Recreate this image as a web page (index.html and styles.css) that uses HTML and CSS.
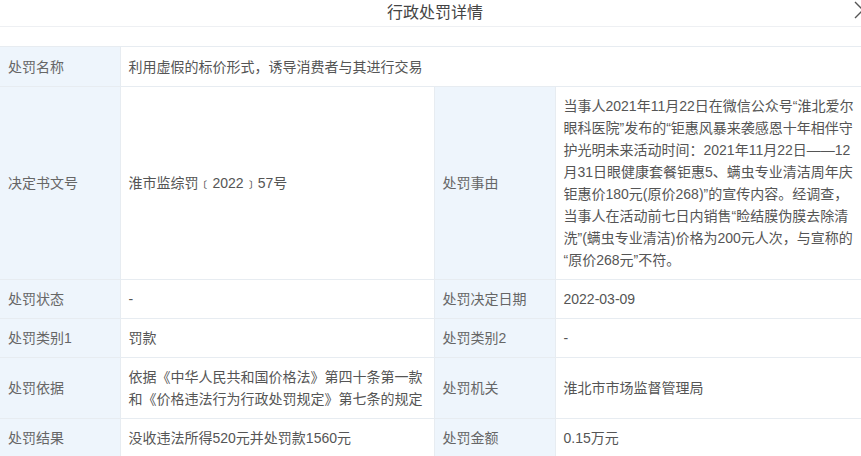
FILE: index.html
```html
<!DOCTYPE html>
<html lang="zh-CN">
<head>
<meta charset="utf-8">
<title>行政处罚详情</title>
<link rel="stylesheet" href="styles.css">
</head>
<body>
<div class="modal">
  <div class="modal-header">
    <span class="modal-title">行政处罚详情</span>
    <svg class="modal-close" width="12" height="18" viewBox="0 0 12 18"><polyline points="2,1 10,9 2,17" fill="none" stroke="#555" stroke-width="1.4"/></svg>
  </div>
  <div class="modal-body">
    <table class="detail">
      <colgroup>
        <col class="c-label"><col class="c-value"><col class="c-label2"><col class="c-value2">
      </colgroup>
      <tr>
        <th>处罚名称</th>
        <td colspan="3">利用虚假的标价形式，诱导消费者与其进行交易</td>
      </tr>
      <tr>
        <th>决定书文号</th>
        <td>淮市监综罚﹝2022﹞57号</td>
        <th>处罚事由</th>
        <td>当事人2021年11月22日在微信公众号“淮北爱尔眼科医院”发布的“钜惠风暴来袭感恩十年相伴守护光明未来活动时间：2021年11月22日——12月31日眼健康套餐钜惠5、螨虫专业清洁周年庆钜惠价180元(原价268)”的宣传内容。经调查，当事人在活动前七日内销售“睑结膜伪膜去除清洗”(螨虫专业清洁)价格为200元人次，与宣称的“原价268元”不符。</td>
      </tr>
      <tr>
        <th>处罚状态</th>
        <td>-</td>
        <th>处罚决定日期</th>
        <td>2022-03-09</td>
      </tr>
      <tr>
        <th>处罚类别1</th>
        <td>罚款</td>
        <th>处罚类别2</th>
        <td>-</td>
      </tr>
      <tr>
        <th>处罚依据</th>
        <td>依据《中华人民共和国价格法》第四十条第一款和《价格违法行为行政处罚规定》第七条的规定</td>
        <th>处罚机关</th>
        <td>淮北市市场监督管理局</td>
      </tr>
      <tr>
        <th>处罚结果</th>
        <td>没收违法所得520元并处罚款1560元</td>
        <th>处罚金额</th>
        <td>0.15万元</td>
      </tr>
    </table>
  </div>
</div>
</body>
</html>
```

FILE: styles.css
```css
html, body {
  margin: 0;
  padding: 0;
  background: #fff;
  overflow: hidden;
}
body {
  font-family: "Liberation Sans", "Noto Sans CJK SC", sans-serif;
  color: #555;
}
.modal {
  width: 870px;
  background: #fff;
}
.modal-header {
  position: relative;
  height: 27px;
  box-sizing: border-box;
  padding-top: 2px;
  border-bottom: 1px solid #eef0f3;
  display: flex;
  align-items: flex-start;
  justify-content: center;
}
.modal-title {
  font-family: "Noto Sans CJK SC", sans-serif;
  font-size: 16px;
  line-height: 19px;
  color: #444;
}
.modal-close {
  position: absolute;
  right: 5px;
  top: 1px;
}
.modal-body {
  padding-top: 19px;
}
.detail {
  width: 870px;
  border-collapse: collapse;
  table-layout: fixed;
  font-size: 14px;
  line-height: 22px;
}
.c-label { width: 120px; }
.c-value { width: 314px; }
.c-label2 { width: 121px; }
.c-value2 { width: 315px; }
.detail th,
.detail td {
  border: 1px solid #e7ecf1;
  padding: 8px 8px;
  text-align: left;
  vertical-align: middle;
  font-weight: normal;
  word-break: break-all;
}
.detail th {
  background: #eef5fc;
  color: #666;
}
.detail td {
  color: #555;
}
.detail tr:first-child th,
.detail tr:first-child td {
  padding-top: 9px;
}
.detail th:first-child {
  border-left: none;
}
```
